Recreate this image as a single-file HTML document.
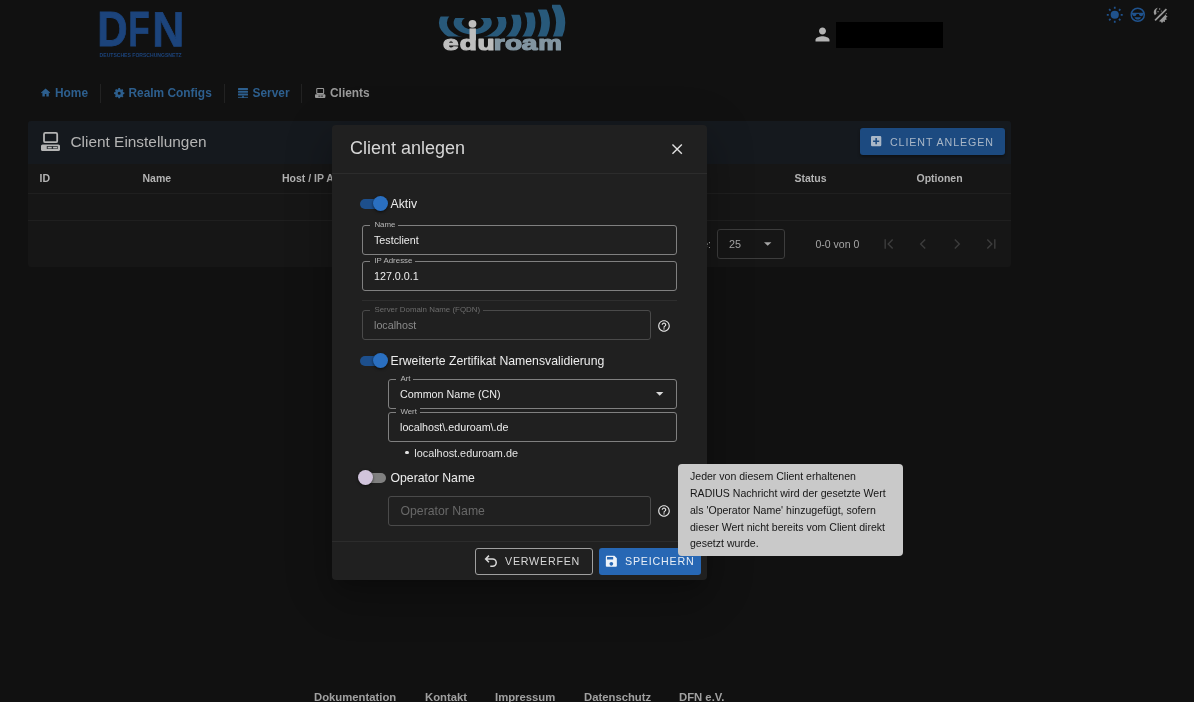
<!DOCTYPE html>
<html lang="de">
<head>
<meta charset="utf-8">
<title>eduroam - Clients</title>
<style>
*{box-sizing:border-box;margin:0;padding:0}
html,body{width:1194px;height:702px;overflow:hidden;background:#111111;}
body{position:relative;font-family:"Liberation Sans",Arial,Helvetica,sans-serif;color:#bdbdbd}
#root{position:absolute;left:0;top:0;width:1194px;height:702px;will-change:transform}
.abs{position:absolute}
svg{display:block;overflow:visible}
/* header */
#dfn{left:90px;top:0;width:100px;height:60px}
#edu{left:430px;top:0px;width:150px;height:60px}
#user{left:812.3px;top:24px;width:21px;height:21px}
#redact{left:836px;top:21.700px;width:106.500px;height:26px;background:#000}
/* nav */
.nv{top:86.3px;font-weight:bold;font-size:11.9px;line-height:14px;color:#2d5f8e;white-space:nowrap}
.nsep{top:84px;width:1px;height:19px;background:#222}
/* card */
#card{left:28px;top:121px;width:983px;height:146px;background:#161616;border-radius:3px;overflow:hidden}
#cardhead{left:0;top:0;width:983px;height:42.6px;background:#15191e}
#cardtitle{left:42.5px;top:10.7px;font-size:15.4px;color:#b4b4b4;white-space:nowrap;line-height:20px}
#addbtn{left:832px;top:7px;width:145px;height:27px;background:#1c4a80;border-radius:3px;box-shadow:0 2px 3px rgba(0,0,0,.35);color:#a9b7c7;font-size:10.7px;letter-spacing:0.9px;line-height:28px;white-space:nowrap}
#addbtn span{position:absolute;left:30px;top:0}
.th{top:49.9px;font-size:10.5px;font-weight:bold;color:#b3b3b3;line-height:14px;white-space:nowrap}
.hl{left:0;width:983px;height:1px;background:#1f1f1f}
#rpp{left:689px;top:108px;width:68px;height:30px;border:1px solid #3d3d3d;border-radius:3px}
/* modal */
#modal{left:332px;top:125px;width:375px;height:455px;background:#202020;border-radius:4px;box-shadow:0px 11px 15px -7px rgba(0,0,0,0.2),0px 24px 38px 3px rgba(0,0,0,0.14),0px 9px 46px 8px rgba(0,0,0,0.12);color:#e6e6e6}
#mtitle{left:18px;top:11px;font-size:18px;line-height:24px;color:#d6d6d6;white-space:nowrap}
.mdiv{height:1px;background:#2c2c2c}
.sw{width:26px;height:10px;border-radius:5px}
.sw.on{background:#1d4f8c}
.sw.off{background:#808080}
.knob{width:15px;height:15px;border-radius:50%;box-shadow:0 1px 3px rgba(0,0,0,.6)}
.knob.on{background:#2a6fc0}
.knob.off{background:#d1c4dc}
.swl{font-size:12.25px;line-height:16px;color:#ececec;white-space:nowrap}
.fld{border:1px solid #808080;border-radius:3px;height:30px}
.fld.dis{border-color:#4a4a4a}
.fld .lab{position:absolute;top:-6px;left:7.4px;padding:0 3px 0 4px;background:#202020;font-size:7.9px;line-height:10px;color:#b8b8b8;white-space:nowrap}
.fld.dis .lab{color:#6c6c6c}
.fld .val{position:absolute;left:11px;top:8px;font-size:10.72px;line-height:13px;color:#ececec;white-space:nowrap}
.fld.dis .val{color:#8a8a8a}
.btn{height:27px;border-radius:3px;font-size:10.7px;letter-spacing:0.78px;line-height:27px;white-space:nowrap}
#tip{left:678px;top:464px;width:225px;height:91.600px;background:#c9c9c9;border-radius:4px;color:#161616;font-size:10.55px;line-height:16.75px;padding:4.400px 0 0 12px;white-space:nowrap}
#foot{left:0;top:689.7px;width:1194px;font-size:11.3px;font-weight:bold;color:#a0a0a0;white-space:nowrap;line-height:14px}
#foot span{position:absolute;top:0}
</style>
</head>
<body>
<div id="root">

<!-- DFN logo -->
<svg id="dfn" class="abs" viewBox="0 0 100 60">
  <g font-family="'Liberation Sans',sans-serif" font-weight="bold" font-size="10.0" fill="#1c447c" stroke="#1c447c" stroke-width="0.1619">
    <text transform="translate(7.19,46.3) rotate(0.03) scale(4.2069,4.9400)">D</text>
    <text transform="translate(38.25,46.3) rotate(0.03) scale(3.5086,4.9400)">F</text>
    <text transform="translate(62.23,46.3) rotate(0.03) scale(4.4396,4.9400)">N</text>
  </g>
  <text x="9.6" y="56.8" font-family="'Liberation Sans',sans-serif" font-weight="bold" font-size="5.8" fill="#1c447c" textLength="82" lengthAdjust="spacingAndGlyphs">DEUTSCHES FORSCHUNGSNETZ</text>
</svg>

<!-- eduroam logo -->
<svg id="edu" class="abs" viewBox="0 0 150 60">
  <defs>
    <clipPath id="ec1"><polygon points="0,16.4 20,16.4 20,18.1 64,18.1 64,17 80,17 80,36.5 0,36.5"/></clipPath>
    <clipPath id="ec2"><polygon points="64,17 79,17 79,14.8 94,14.8 94,12.6 108,12.6 108,9.4 122,9.4 122,4.8 150,4.8 150,36.5 64,36.5"/></clipPath>
  </defs>
  <g clip-path="url(#ec1)"><g transform="translate(42.7,22.8) scale(1,0.6)" fill="none" stroke="#28597a" stroke-width="8"><circle r="15.1"/><circle r="29.8"/></g></g>
  <g clip-path="url(#ec2)"><g transform="translate(42.7,22.8) scale(1,0.6)" fill="none" stroke="#28597a" stroke-width="8"><circle r="44.6" stroke-width="8.2"/><circle r="58.6" stroke-width="8.3"/><circle r="72.9" stroke-width="8.7"/><circle r="88" stroke-width="9.2"/></g></g>
  <rect x="39.5" y="28.4" width="6.4" height="12" fill="#bebebe"/>
  <circle cx="42.5" cy="23.8" r="3.9" fill="#bebebe"/>
  <g transform="scale(1.4,1)" font-family="'Liberation Sans',sans-serif" font-weight="bold" font-size="20" stroke-width="1.2" stroke-linejoin="round">
    <text y="50.3" x="9.36 21.2 33.9" fill="#bebebe" stroke="#bebebe">edu</text>
    <text y="50.3" x="45.5 53.5 65.6" fill="#8295a1" stroke="#8295a1">roa</text>
  </g>
  <g transform="scale(1.327,1)" font-family="'Liberation Sans',sans-serif" font-weight="bold" font-size="20" stroke-width="1.2" stroke-linejoin="round"><text y="50.3" x="81.5" fill="#8295a1" stroke="#8295a1">m</text></g>
</svg>

<!-- user -->
<svg id="user" class="abs" viewBox="0 0 24 24"><path fill="#b4b4b4" d="M12 12c2.21 0 4-1.790 4-4s-1.790-4-4-4-4 1.790-4 4 1.790 4 4 4zm0 2c-2.670 0-8 1.340-8 4v2h16v-2c0-2.660-5.330-4-8-4z"/></svg>
<div id="redact" class="abs"></div>

<!-- theme mode icons -->
<svg class="abs" style="left:1106.200px;top:6px;width:17.500px;height:17.500px" viewBox="0 0 24 24"><circle cx="12" cy="12" r="5.600" fill="#1f528d"/><path fill="none" stroke="#1f528d" stroke-width="2.400" d="M12.00 3.80L12.00 1.10M17.80 6.20L19.71 4.29M20.20 12.00L22.90 12.00M17.80 17.80L19.71 19.71M12.00 20.20L12.00 22.90M6.20 17.80L4.29 19.71M3.80 12.00L1.10 12.00M6.20 6.20L4.29 4.29"/></svg>
<svg class="abs" style="left:1129px;top:6px;width:17.5px;height:17.5px" viewBox="0 0 24 24">
  <circle cx="12" cy="12" r="9" fill="none" stroke="#1f528d" stroke-width="2"/>
  <path fill="#1f528d" d="M3.500 9.200h17v1.800h-.800c0 1.700-1.300 2.900-3 2.900-1.700 0-3-1.200-3.100-2.900h-3.200c-.100 1.700-1.400 2.900-3.100 2.900-1.700 0-3-1.200-3-2.900h-.800z"/>
  <path fill="#1f528d" d="M7.500 15.300h9c-.700 2-2.400 3.200-4.500 3.200s-3.800-1.200-4.500-3.200z"/>
</svg>
<svg class="abs" style="left:1152px;top:6px;width:17.500px;height:17.5px" viewBox="0 0 24 24">
  <path fill="none" stroke="#9a9a9a" stroke-width="2.300" d="M4.200 19.800 19.800 4.200"/>
  <path fill="#9a9a9a" d="M8 2.400C4.300 3 1.800 6.500 2.600 10.100c.200 1 .700 1.900 1.300 2.600L6.300 10.300C5.100 7.700 5.600 4.700 8 2.400z"/>
  <circle cx="10.500" cy="4" r="1" fill="#9a9a9a"/><circle cx="8.300" cy="7.800" r=".9" fill="#9a9a9a"/><circle cx="12.800" cy="7" r=".7" fill="#9a9a9a"/>
  <path fill="#9a9a9a" d="M20.800 9.600 9.600 20.800c.900.400 1.900.700 2.900.700l1.200 2 1.500-2.400 2.700 1-.300-2.900 2.800-.600-1.300-2.500 2.400-1.500-2-1.200c0-1.400-.300-2.700-.700-3.800z"/>
</svg>

<!-- nav -->
<svg class="abs" style="left:41px;top:88.300px;width:9.2px;height:8.7px" viewBox="0 0 10 9"><path fill="#2d5f8e" d="M5 .2 0 4.600l.700.800.800-.700V9h2.700V6.200h1.600V9h2.700V4.700l.800.700.700-.800z"/></svg>
<div class="nv abs" style="left:55px">Home</div>
<div class="nsep abs" style="left:100px"></div>
<svg class="abs" style="left:114px;top:87.500px;width:10.4px;height:10.4px" viewBox="0 0 10 10"><path fill="#2d5f8e" fill-rule="evenodd" d="M4.02 1.17 L4.14 0.07 L5.86 0.07 L5.98 1.17 L7.01 1.60 L7.88 0.91 L9.09 2.12 L8.40 2.99 L8.83 4.02 L9.93 4.14 L9.93 5.86 L8.83 5.98 L8.40 7.01 L9.09 7.88 L7.88 9.09 L7.01 8.40 L5.98 8.83 L5.86 9.93 L4.14 9.93 L4.02 8.83 L2.99 8.40 L2.12 9.09 L0.91 7.88 L1.60 7.01 L1.17 5.98 L0.07 5.86 L0.07 4.14 L1.17 4.02 L1.60 2.99 L0.91 2.12 L2.12 0.91 L2.99 1.60Z M3.55 5.00 a1.45 1.45 0 1 0 2.9 0 a1.45 1.45 0 1 0 -2.9 0Z"/></svg>
<div class="nv abs" style="left:128.500px">Realm Configs</div>
<div class="nsep abs" style="left:224px"></div>
<svg class="abs" style="left:238px;top:88.300px;width:10px;height:10px" viewBox="0 0 10 10"><g fill="#2d5f8e"><rect x="0" y="0" width="10" height="2.1" rx=".5"/><rect x="0" y="2.700" width="10" height="2.1" rx=".5"/><rect x="0" y="5.400" width="10" height="2.1" rx=".5"/><rect x="4.500" y="7.500" width="1" height="1.700"/><rect x="0" y="8.900" width="10" height=".9"/><rect x="3.900" y="8.300" width="2.200" height="1.700" rx=".4"/></g></svg>
<div class="nv abs" style="left:252.500px">Server</div>
<div class="nsep abs" style="left:301px"></div>
<svg class="abs" style="left:315px;top:88.300px;width:10.4px;height:9.900px" viewBox="0 0 20 19"><rect x="3.400" y="1" width="13.200" height="9.800" rx="1.200" fill="none" stroke="#9a9a9a" stroke-width="2"/><rect x="0" y="12.200" width="20" height="6.800" rx="1.500" fill="#9a9a9a"/><rect x="6.500" y="14.800" width="4" height="1.600" fill="#111"/><rect x="11.500" y="14.800" width="4" height="1.600" fill="#111"/></svg>
<div class="nv abs" style="left:330px;color:#9a9a9a">Clients</div>

<!-- card -->
<div id="card" class="abs">
  <div id="cardhead" class="abs"></div>
  <svg class="abs" style="left:13px;top:11px;width:20px;height:20px" viewBox="0 0 20 20"><rect x="3" y=".900" width="13.200" height="9.300" rx="1.300" fill="none" stroke="#b4b4b4" stroke-width="1.800"/><rect x="0" y="12.400" width="19" height="6.700" rx="1.600" fill="#b4b4b4"/><rect x="5.750" y="14.100" width="11" height="3" rx=".5" fill="#2b2f33"/><rect x="6.750" y="14.800" width="4" height="1.600" fill="#b4b4b4"/><rect x="12.100" y="14.800" width="4" height="1.600" fill="#b4b4b4"/></svg>
  <div id="cardtitle" class="abs">Client Einstellungen</div>
  <div id="addbtn" class="abs"><svg class="abs" style="left:11px;top:8px;width:10.300px;height:10.300px" viewBox="0 0 10 10"><path fill="#a9b7c7" fill-rule="evenodd" d="M1.200 0h7.600Q10 0 10 1.200v7.600Q10 10 8.800 10H1.200Q0 10 0 8.800V1.200Q0 0 1.200 0zM4.250 2v2.250H2v1.500h2.250V8h1.500V5.750H8v-1.500H5.750V2z"/></svg><span>CLIENT ANLEGEN</span></div>
  <div class="th abs" style="left:11.500px">ID</div>
  <div class="th abs" style="left:114.500px">Name</div>
  <div class="th abs" style="left:254px">Host / IP Adresse</div>
  <div class="th abs" style="left:766.500px">Status</div>
  <div class="th abs" style="left:888.500px">Optionen</div>
  <div class="hl abs" style="top:72px"></div>
  <div class="hl abs" style="top:99px"></div>
  <div class="abs" style="right:300px;top:115.500px;font-size:10.5px;line-height:14px;color:#a6a6a6;white-space:nowrap">Zeilen pro Seite:</div>
  <div id="rpp" class="abs"></div>
  <div class="abs" style="left:701px;top:115.500px;font-size:10.800px;line-height:14px;color:#a6a6a6">25</div>
  <svg class="abs" style="left:736px;top:120.500px;width:7.400px;height:4px" viewBox="0 0 10 5"><path fill="#a6a6a6" d="M0 0h10L5 5z"/></svg>
  <div class="abs" style="left:787.500px;top:115.500px;font-size:10.500px;line-height:14px;color:#a6a6a6;white-space:nowrap">0-0 von 0</div>
  <svg class="abs" style="left:855px;top:117px;width:12px;height:12px" viewBox="0 0 12 12"><path fill="none" stroke="#3c3c3c" stroke-width="1.400" d="M2.200 1.300v9.400M9.700 1.500 5.200 6l4.500 4.500"/></svg>
  <svg class="abs" style="left:888.500px;top:117px;width:12px;height:12px" viewBox="0 0 12 12"><path fill="none" stroke="#3c3c3c" stroke-width="1.400" d="M8.200 1.500 3.700 6l4.500 4.500"/></svg>
  <svg class="abs" style="left:922.500px;top:117px;width:12px;height:12px" viewBox="0 0 12 12"><path fill="none" stroke="#3c3c3c" stroke-width="1.400" d="M3.800 1.500 8.300 6l-4.500 4.500"/></svg>
  <svg class="abs" style="left:957px;top:117px;width:12px;height:12px" viewBox="0 0 12 12"><path fill="none" stroke="#3c3c3c" stroke-width="1.400" d="M9.800 1.300v9.400M2.300 1.500 6.800 6l-4.500 4.500"/></svg>
</div>

<!-- modal -->
<div id="modal" class="abs">
  <div id="mtitle" class="abs">Client anlegen</div>
  <svg class="abs" style="left:339.700px;top:19px;width:10.300px;height:10.300px" viewBox="0 0 11 11"><path fill="none" stroke="#e0e0e0" stroke-width="1.500" d="M.5.500l10 10M10.500.500l-10 10"/></svg>
  <div class="mdiv abs" style="left:0;top:48px;width:375px"></div>

  <div class="sw on abs" style="left:27.600px;top:74px"></div>
  <div class="knob on abs" style="left:40.600px;top:71.300px"></div>
  <div class="swl abs" style="left:58.500px;top:71px">Aktiv</div>

  <div class="fld abs" style="left:30px;top:100px;width:315px"><span class="lab">Name</span><span class="val">Testclient</span></div>
  <div class="fld abs" style="left:30px;top:136px;width:315px"><span class="lab">IP Adresse</span><span class="val">127.0.0.1</span></div>
  <div class="mdiv abs" style="left:30px;top:175px;width:315px;background:#2e2e2e"></div>
  <div class="fld dis abs" style="left:30px;top:185px;width:289px"><span class="lab">Server Domain Name (FQDN)</span><span class="val">localhost</span></div>
  <svg class="abs help" style="left:324.500px;top:193.800px;width:14px;height:14px" viewBox="0 0 24 24"><path fill="#e4e4e4" d="M11 18h2v-2h-2v2zm1-16C6.480 2 2 6.480 2 12s4.480 10 10 10 10-4.480 10-10S17.520 2 12 2zm0 18c-4.410 0-8-3.590-8-8s3.590-8 8-8 8 3.590 8 8-3.590 8-8 8zm0-14c-2.210 0-4 1.790-4 4h2c0-1.100.900-2 2-2s2 .900 2 2c0 2-3 1.750-3 5h2c0-2.250 3-2.500 3-5 0-2.210-1.790-4-4-4z"/></svg>

  <div class="sw on abs" style="left:27.600px;top:231px"></div>
  <div class="knob on abs" style="left:40.600px;top:228.300px"></div>
  <div class="swl abs" style="left:58.500px;top:228px">Erweiterte Zertifikat Namensvalidierung</div>

  <div class="fld abs" style="left:56px;top:254px;width:289px"><span class="lab">Art</span><span class="val">Common Name (CN)</span></div>
  <svg class="abs" style="left:324.300px;top:267px;width:7.400px;height:3.800px" viewBox="0 0 10 5"><path fill="#d8d8d8" d="M0 0h10L5 5z"/></svg>
  <div class="fld abs" style="left:56px;top:287px;width:289px"><span class="lab">Wert</span><span class="val">localhost\.eduroam\.de</span></div>
  <div class="abs" style="left:73px;top:325.500px;width:3.600px;height:3.600px;border-radius:50%;background:#e4e4e4"></div>
  <div class="abs" style="left:82.300px;top:321.500px;font-size:10.850px;line-height:13px;color:#e4e4e4;white-space:nowrap">localhost.eduroam.de</div>

  <div class="sw off abs" style="left:27.600px;top:348px"></div>
  <div class="knob off abs" style="left:25.600px;top:345.300px"></div>
  <div class="swl abs" style="left:58.500px;top:345px">Operator Name</div>

  <div class="fld dis abs" style="left:56px;top:371px;width:263px"><span class="val" style="font-size:12.250px;top:7px;left:11.500px;color:#686868;line-height:15px">Operator Name</span></div>
  <svg class="abs help" style="left:324.500px;top:379px;width:14px;height:14px" viewBox="0 0 24 24"><path fill="#e4e4e4" d="M11 18h2v-2h-2v2zm1-16C6.480 2 2 6.480 2 12s4.480 10 10 10 10-4.480 10-10S17.520 2 12 2zm0 18c-4.410 0-8-3.590-8-8s3.590-8 8-8 8 3.590 8 8-3.590 8-8 8zm0-14c-2.210 0-4 1.790-4 4h2c0-1.100.900-2 2-2s2 .900 2 2c0 2-3 1.750-3 5h2c0-2.250 3-2.500 3-5 0-2.210-1.790-4-4-4z"/></svg>

  <div class="mdiv abs" style="left:0;top:415.600px;width:375px"></div>
  <div class="btn abs" style="left:143px;top:422.600px;width:118px;height:27.400px;border:1px solid #a0a0a0;color:#d8d8d8;line-height:25.400px"><span class="abs" style="left:29px;top:0">VERWERFEN</span></div>
  <svg class="abs" style="left:151px;top:427.600px;width:15.900px;height:15.900px" viewBox="0 0 24 24"><path fill="none" stroke="#d8d8d8" stroke-width="2.300" d="M9 14 4 9l5-5M4 9h10.500a5.500 5.500 0 0 1 5.500 5.500a5.500 5.500 0 0 1-5.500 5.500H11"/></svg>
  <div class="btn abs" style="left:266.500px;top:422.600px;width:102.500px;height:27.400px;background:#2767b4;color:#e8eef6"><span class="abs" style="left:26.500px;top:0">SPEICHERN</span></div>
  <svg class="abs" style="left:272.200px;top:428.800px;width:14.700px;height:14.700px" viewBox="0 0 24 24"><path fill="#eef3f9" d="M17 3H5c-1.110 0-2 .900-2 2v14c0 1.100.890 2 2 2h14c1.100 0 2-.900 2-2V7l-4-4zm-5 16c-1.660 0-3-1.340-3-3s1.340-3 3-3 3 1.340 3 3-1.340 3-3 3zm3-10H5V5h10v4z"/></svg>
</div>

<!-- tooltip -->
<div id="tip" class="abs">Jeder von diesem Client erhaltenen<br>RADIUS Nachricht wird der gesetzte Wert<br>als 'Operator Name' hinzugefügt, sofern<br>dieser Wert nicht bereits vom Client direkt<br>gesetzt wurde.</div>

<!-- footer -->
<div id="foot" class="abs">
  <span style="left:314px">Dokumentation</span>
  <span style="left:425px">Kontakt</span>
  <span style="left:495px">Impressum</span>
  <span style="left:584px">Datenschutz</span>
  <span style="left:679px">DFN e.V.</span>
</div>

</div>
</body>
</html>
